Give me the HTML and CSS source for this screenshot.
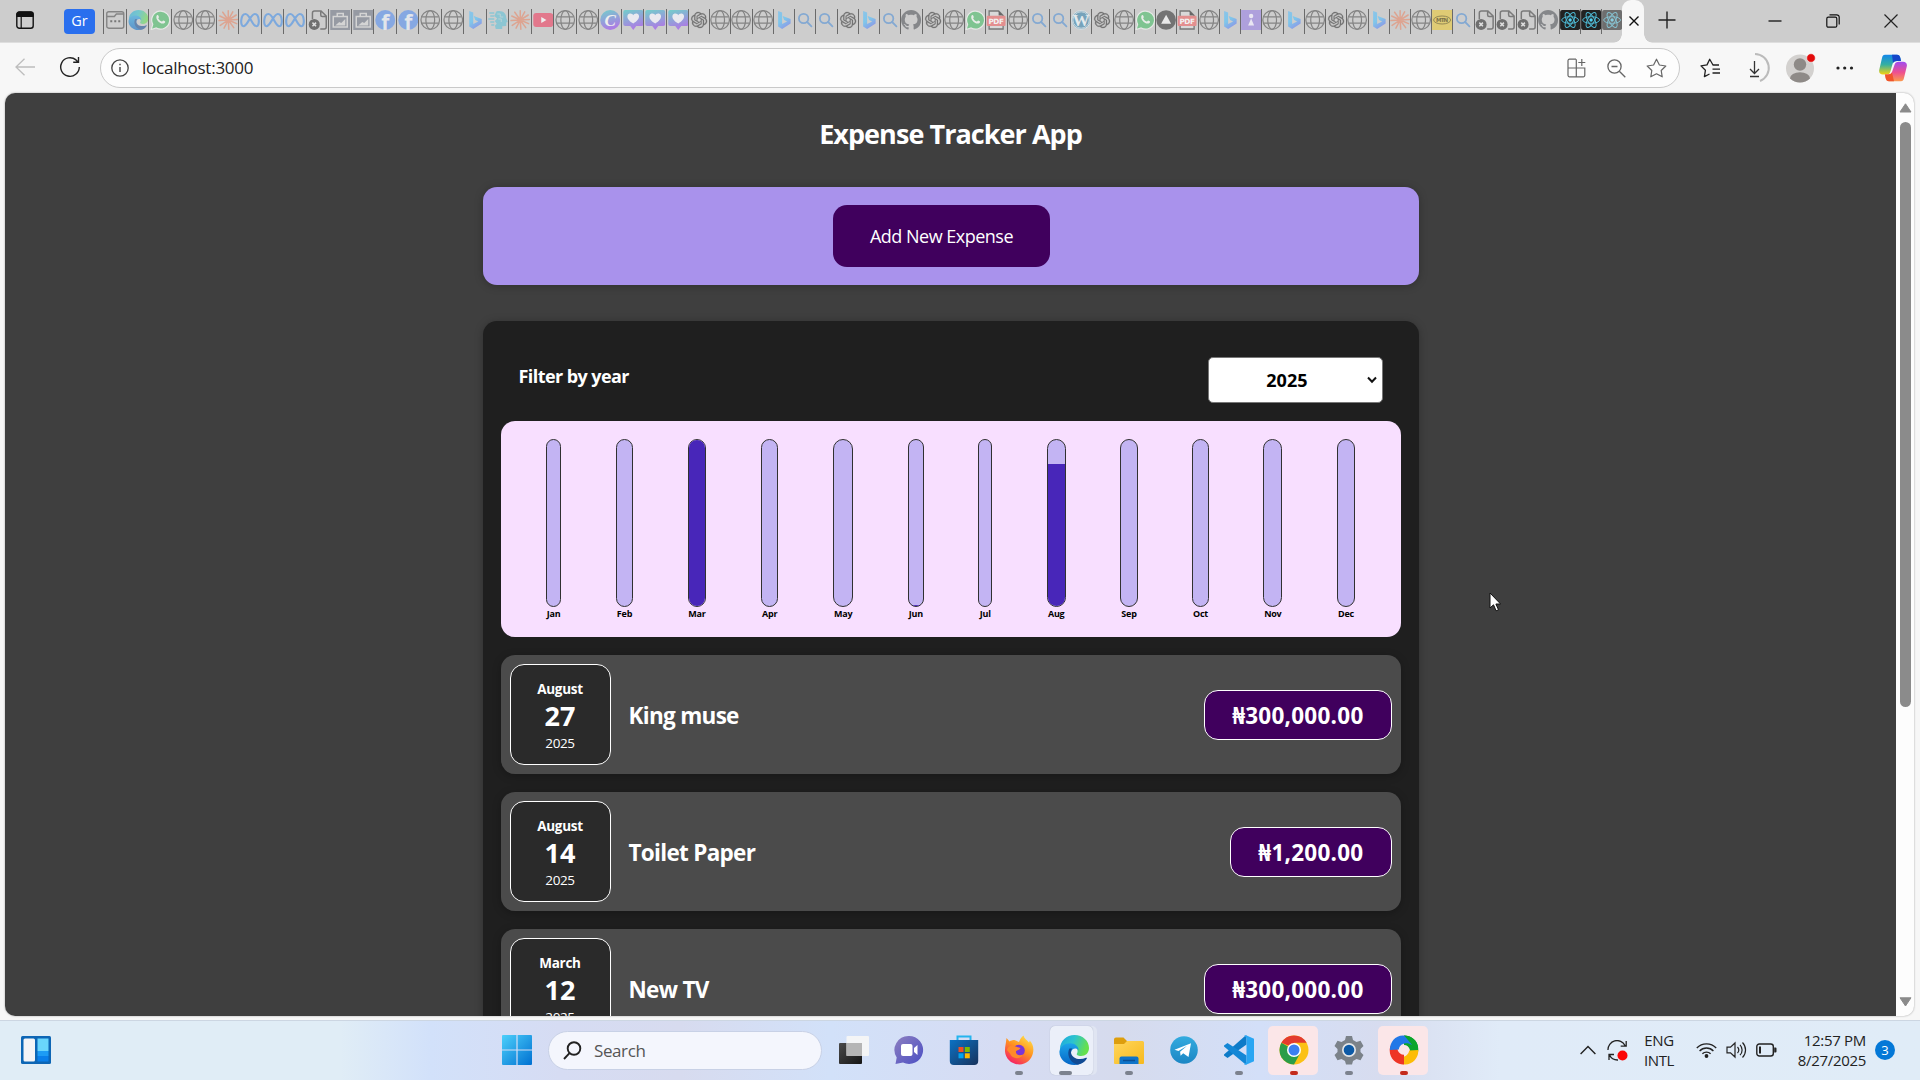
FILE: index.html
```html
<!DOCTYPE html>
<html lang="en">
<head>
<meta charset="utf-8">
<title>Expense Tracker App</title>
<link rel="stylesheet" href="styles.css">
</head>
<body>
<svg class="gradients" aria-hidden="true">
  <defs>
    <linearGradient id="g-edgetop" x1="0" y1="0" x2="1" y2=".3"><stop offset="0" stop-color="#1ba7e0"/><stop offset=".5" stop-color="#2cc3cf"/><stop offset="1" stop-color="#66e04c"/></linearGradient>
    <linearGradient id="g-edgeleft" x1="0" y1="0" x2="0" y2="1"><stop offset="0" stop-color="#1ca5ea"/><stop offset="1" stop-color="#0666c6"/></linearGradient>
    <linearGradient id="g-bing" x1="0" y1="0" x2=".5" y2="1"><stop offset="0" stop-color="#8cc4e8"/><stop offset=".55" stop-color="#7fc6ea"/><stop offset="1" stop-color="#8b9be6"/></linearGradient>
    <linearGradient id="g-heart" x1="0" y1="0" x2=".3" y2="1"><stop offset="0" stop-color="#72cfcb"/><stop offset="1" stop-color="#ac7ce4"/></linearGradient>
    <linearGradient id="g-start" x1="0" y1="0" x2="1" y2="1"><stop offset="0" stop-color="#4cd0fb"/><stop offset="1" stop-color="#0070d1"/></linearGradient>
    <linearGradient id="g-dark" x1="0" y1="0" x2="1" y2="1"><stop offset="0" stop-color="#4a4a4a"/><stop offset="1" stop-color="#151515"/></linearGradient>
    <linearGradient id="g-chat" x1="0" y1="0" x2="1" y2="1"><stop offset="0" stop-color="#8d7fc0"/><stop offset="1" stop-color="#4b4fc4"/></linearGradient>
    <linearGradient id="g-store" x1="0" y1="0" x2="1" y2="1"><stop offset="0" stop-color="#0c72c4"/><stop offset="1" stop-color="#17325c"/></linearGradient>
    <linearGradient id="g-fox" x1=".8" y1="0" x2=".2" y2="1"><stop offset="0" stop-color="#ffe04a"/><stop offset=".45" stop-color="#ff9320"/><stop offset="1" stop-color="#f5156c"/></linearGradient>
    <linearGradient id="g-folder" x1="0" y1="0" x2="1" y2="1"><stop offset="0" stop-color="#ffd65c"/><stop offset="1" stop-color="#f7b91d"/></linearGradient>
    <linearGradient id="g-tg" x1="0" y1="0" x2="0" y2="1"><stop offset="0" stop-color="#33abdf"/><stop offset="1" stop-color="#1b86c4"/></linearGradient>
    <linearGradient id="g-cop1" x1="0" y1="0" x2="0" y2="1"><stop offset="0" stop-color="#1287ea"/><stop offset=".5" stop-color="#35b0a0"/><stop offset="1" stop-color="#f6d20f"/></linearGradient>
    <linearGradient id="g-cop2" x1="0" y1="0" x2="0" y2="1"><stop offset="0" stop-color="#a04bf0"/><stop offset=".55" stop-color="#ee5090"/><stop offset="1" stop-color="#fb9a4e"/></linearGradient>
  </defs>
</svg>
<svg class="sprite" aria-hidden="true">
  <symbol id="globe" viewBox="0 0 20 20"><g fill="none" stroke="#848484" stroke-width="1.2"><circle cx="10" cy="10" r="9.3"/><ellipse cx="10" cy="10" rx="4.4" ry="9.3"/><path d="M1.4 6.8h17.2M1.4 13.2h17.2"/></g></symbol>
  <symbol id="panel" viewBox="0 0 20 20"><g fill="none" stroke="#858585" stroke-width="1.4"><path d="M3.500 1.700h13a2 2 0 0 1 2 2v12.500a2 2 0 0 1-2 2h-13a2 2 0 0 1-2-2V3.700a2 2 0 0 1 2-2zM1.500 6.500h7.600l2-2.500h7.400"/></g><path d="M5 10.200h2v2H5zM9 10.200h2v2H9zM13 10.200h2v2h-2z" fill="#777"/></symbol>
  <symbol id="edge" viewBox="0 0 30 30"><path d="M1 14C1 6 7.500 0 15.500 0 24 0 30 6 30 13c0 5-3.500 8-8 8-3 0-5-1.200-4-2.500C20 15 17 10.500 12 10.500 6 10.500 1.500 13.500 1 18z" fill="url(#g-edgetop)"/><path d="M.5 16C1.500 11 6 8.200 11 8.200c5 0 9 3.300 8.500 7.300-1.500-3-7-2.500-7.500 2-.5 5 5 11 14 7.500-2.500 3.200-6.500 5-10.700 5C6.500 30-.3 23 .5 16z" fill="url(#g-edgeleft)"/><path d="M10.500 13.500c-3 5-.5 13.500 7.500 16 4 0 8-2.500 9.800-6 .3-.6-.2-1-.8-.7-7 3.200-14.500.2-15-5.300 0-1.600.4-3 1.400-4z" fill="#114a93"/></symbol>
  <symbol id="wa" viewBox="0 0 20 20"><path d="M1 19.500l1.500-5.200a9 9 0 1 1 3.500 3.600z" fill="#7fc491" stroke="#e6e9e6" stroke-width="1.200"/><path d="M6.500 5.500c1.200-1 1.600-.2 2.200 1.500.1.600-.9 1-.6 1.500.8 1.500 2 2.500 3.400 3 .6.200 1-1.200 1.600-1 2 .7 2.300 1 1.500 2.200C11.500 16 4.200 9.500 6.500 5.500z" fill="#e8ece8"/></symbol>
  <symbol id="claude" viewBox="0 0 20 20"><path d="M10 10L10 .8M10 10L14.500 1.800M10 10L18 5M10 10L19.300 9.400M10 10L18.400 13.600M10 10L15.500 17.600M10 10L10.600 19.200M10 10L5.800 18.200M10 10L2 15.400M10 10L.8 10.600M10 10L1.500 6M10 10L4.500 2.200" stroke="#dda491" stroke-width="1.500" stroke-linecap="round"/></symbol>
  <symbol id="meta" viewBox="0 0 20 20"><path d="M3 16.200C-.2 16.200.2 4 5.200 4c4.600 0 6.600 12.200 11 12.200C19.800 16.200 19.300 4 14.600 4 10 4 7.500 16.200 3 16.200z" fill="none" stroke="#7da9dd" stroke-width="2.100"/></symbol>
  <symbol id="filex" viewBox="0 0 20 20"><path d="M4.200 9V3a2 2 0 0 1 2-2h6.600l5.200 5v11a2 2 0 0 1-2 2h-4M12.500 1v4a1.500 1.500 0 0 0 1.500 1.500h4" fill="none" stroke="#7a7a7a" stroke-width="1.500"/><circle cx="6" cy="14.400" r="5.500" fill="#6f6f6f"/><path d="M4.200 12.600l3.600 3.600M7.800 12.600l-3.600 3.600" stroke="#ddd" stroke-width="1.500"/></symbol>
  <symbol id="bag" viewBox="0 0 20 20"><path d="M0 0h20v20H0z" fill="#969aa3"/><path d="M3 6.500h14v10.500H3zM7 6.500V3.500h6v3" fill="none" stroke="#d4d4d4" stroke-width="1.500"/><path d="M5 15.500l4-3.500 2 1 4-4v6.500z" fill="#d4d4d4"/></symbol>
  <symbol id="fb" viewBox="0 0 20 20"><circle cx="10" cy="10" r="10" fill="#86a8e2"/><text x="6" y="19.500" font-family="Open Sans, sans-serif" font-weight="700" font-size="21" fill="#e2e5ea">f</text></symbol>
  <symbol id="bing" viewBox="0 0 20 20"><path d="M4 1l4 1.500v11.500l5-2.500-3-1.500-1.500-4 8 3v4.500L8 19l-4-2.500z" fill="url(#g-bing)"/></symbol>
  <symbol id="ai" viewBox="0 0 20 20"><path d="M8 1.500c6-1.500 10 1.500 10 6.500l1.500 4-1.500.6V16l-4 .3V19H7.500l-.8-3.200 1.800-2L6.500 11 9 8.500 6 6z" fill="#8cc6d3"/><path d="M1 3h5M2 6h4M0 9h6M2 12h4M3 15h3" stroke="#8cc6d3" stroke-width="1.300"/><path d="M9 4h3v3h3M10 9h3v3" stroke="#b9d2d7" fill="none"/></symbol>
  <symbol id="yt" viewBox="0 0 20 20"><rect y="3" width="20" height="14" rx="3" fill="#e2788c"/><path d="M8 7l5.200 3L8 13z" fill="#eee"/></symbol>
  <symbol id="canva" viewBox="0 0 20 20"><circle cx="10" cy="10" r="10" fill="url(#g-heart)"/><text x="4.300" y="15.500" font-family="Liberation Serif, serif" font-style="italic" font-weight="700" font-size="17" fill="#eee">C</text></symbol>
  <symbol id="heart" viewBox="0 0 20 20"><path d="M2 0h16a2 2 0 0 1 2 2v12a2 2 0 0 1-2 2h-5l-3 4-3-4H2a2 2 0 0 1-2-2V2a2 2 0 0 1 2-2z" fill="url(#g-heart)"/><path d="M10 13.500C1.500 8.500 4 3.500 7 3.500c1.500 0 2.500.8 3 1.800.5-1 1.500-1.800 3-1.800 3 0 5.500 5-3 10z" fill="#e9e9ef"/></symbol>
  <symbol id="gpt" viewBox="-3 -3 30 30"><path fill="#747474" stroke="#747474" stroke-width=".4" d="M22.2819 9.8211a5.9847 5.9847 0 0 0-.5157-4.9108 6.0462 6.0462 0 0 0-6.5098-2.9A6.0651 6.0651 0 0 0 4.9807 4.1818a5.9847 5.9847 0 0 0-3.9977 2.9 6.0462 6.0462 0 0 0 .7427 7.0966 5.98 5.98 0 0 0 .511 4.9107 6.051 6.051 0 0 0 6.5146 2.9001A5.9847 5.9847 0 0 0 13.2599 24a6.0557 6.0557 0 0 0 5.7718-4.2058 5.9894 5.9894 0 0 0 3.9977-2.9001 6.0557 6.0557 0 0 0-.7475-7.0729zm-9.022 12.6081a4.4755 4.4755 0 0 1-2.8764-1.0408l.1419-.0804 4.7783-2.7582a.7948.7948 0 0 0 .3927-.6813v-6.7369l2.02 1.1686a.071.071 0 0 1 .038.052v5.5826a4.504 4.504 0 0 1-4.4945 4.4944zm-9.6607-4.1254a4.4708 4.4708 0 0 1-.5346-3.0137l.142.0852 4.783 2.7582a.7712.7712 0 0 0 .7806 0l5.8428-3.3685v2.3324a.0804.0804 0 0 1-.0332.0615L9.74 19.9502a4.4992 4.4992 0 0 1-6.1408-1.6464zM2.3408 7.8956a4.485 4.485 0 0 1 2.3655-1.9728V11.6a.7664.7664 0 0 0 .3879.6765l5.8144 3.3543-2.0201 1.1685a.0757.0757 0 0 1-.071 0l-4.8303-2.7865A4.504 4.504 0 0 1 2.3408 7.872zm16.5963 3.8558L13.1038 8.364 15.1192 7.2a.0757.0757 0 0 1 .071 0l4.8303 2.7913a4.4944 4.4944 0 0 1-.6765 8.1042v-5.6772a.79.79 0 0 0-.407-.667zm2.0107-3.0231l-.142-.0852-4.7735-2.7818a.7759.7759 0 0 0-.7854 0L9.409 9.2297V6.8974a.0662.0662 0 0 1 .0284-.0615l4.8303-2.7866a4.4992 4.4992 0 0 1 6.6802 4.66zM8.3065 12.863l-2.02-1.1638a.0804.0804 0 0 1-.038-.0567V6.0742a4.4992 4.4992 0 0 1 7.3757-3.4537l-.142.0805L8.704 5.459a.7948.7948 0 0 0-.3927.6813zm1.0976-2.3654l2.602-1.4998 2.6069 1.4998v2.9994l-2.5974 1.4997-2.6067-1.4997Z"/></symbol>
  <symbol id="search" viewBox="0 0 20 20"><g fill="none" stroke="#84a9d2" stroke-width="1.800"><circle cx="8.500" cy="8.500" r="4.700"/><path d="M12 12l4.300 4.300" stroke-linecap="round"/></g></symbol>
  <symbol id="github" viewBox="0 0 16 16"><path fill="#85878a" d="M8 0C3.580 0 0 3.580 0 8c0 3.540 2.290 6.530 5.470 7.590.4.070.55-.17.55-.38 0-.19-.01-.82-.01-1.490-2.010.37-2.530-.49-2.690-.94-.09-.23-.48-.94-.82-1.130-.28-.15-.68-.52-.01-.53.63-.01 1.080.58 1.230.82.72 1.210 1.870.87 2.330.66.07-.52.28-.87.51-1.070-1.780-.2-3.640-.89-3.640-3.950 0-.87.31-1.590.82-2.150-.08-.2-.36-1.020.08-2.120 0 0 .67-.21 2.200.82.64-.18 1.320-.27 2-.27s1.360.09 2 .27c1.530-1.040 2.200-.82 2.200-.82.44 1.100.16 1.920.08 2.120.51.56.82 1.270.82 2.150 0 3.070-1.870 3.750-3.650 3.950.29.25.54.73.54 1.480 0 1.070-.01 1.930-.01 2.200 0 .21.15.46.55.38A8.010 8.010 0 0 0 16 8c0-4.420-3.580-8-8-8z"/></symbol>
  <symbol id="pdf" viewBox="0 0 20 20"><path d="M3 19V1h9.500L17 5.500V19z" fill="#d9d9d9" stroke="#777" stroke-width="1.300"/><path d="M12.500 1v4.500H17z" fill="#666"/><rect x=".6" y="5.800" width="18.800" height="10.200" rx="1" fill="#e38f8f"/><text x="2.300" y="13.800" font-family="DejaVu Sans, sans-serif" font-weight="700" font-size="7.300" textLength="15.500" fill="#f2f2f2">PDF</text></symbol>
  <symbol id="wp" viewBox="0 0 20 20"><circle cx="10" cy="10" r="9.400" fill="#76a3bb" stroke="#dce3e6" stroke-width="1"/><circle cx="10" cy="10" r="8.200" fill="none" stroke="#dce3e6" stroke-width=".8"/><text x="1.400" y="16" font-family="Liberation Serif, serif" font-weight="700" font-size="17" fill="#e4e9eb">W</text></symbol>
  <symbol id="tri" viewBox="0 0 20 20"><circle cx="10" cy="10" r="9.800" fill="#737373"/><path d="M10 4.800l5 9H5z" fill="#e8e8e8"/></symbol>
  <symbol id="purp" viewBox="0 0 20 20"><path d="M0 0h20v20H0z" fill="#aea0dc"/><circle cx="10" cy="6" r="2.200" fill="#e9e6f2"/><path d="M10 8.500l3 7H7z" fill="#e9e6f2"/></symbol>
  <symbol id="mtn" viewBox="0 0 20 20"><path d="M0 0h20v20H0z" fill="#dfcb74"/><ellipse cx="10" cy="10" rx="8.500" ry="4" fill="none" stroke="#8a8050" stroke-width=".9"/><text x="4" y="12.200" font-family="DejaVu Sans, sans-serif" font-weight="700" font-size="5.500" textLength="12" fill="#7d744b">MTN</text></symbol>
  <symbol id="react" viewBox="0 0 20 20"><rect width="20" height="20" rx="2" fill="#222"/><g fill="none" stroke="#4db8d3" stroke-width="1"><ellipse cx="10" cy="10" rx="8.400" ry="3.300"/><ellipse cx="10" cy="10" rx="8.400" ry="3.300" transform="rotate(60 10 10)"/><ellipse cx="10" cy="10" rx="8.400" ry="3.300" transform="rotate(120 10 10)"/></g><circle cx="10" cy="10" r="1.700" fill="#53d0f0"/></symbol>
</svg>

<header class="tabstrip">
  <svg class="workspaces" viewBox="0 0 18 18"><rect x=".8" y="1" width="16.400" height="16.200" rx="2.500" fill="none" stroke="#111" stroke-width="1.400"/><path d="M1 3.200A2.200 2.200 0 0 1 3.200 1h11.600A2.200 2.200 0 0 1 17 3.200V5.500H1zM5.200 5v12" fill="#111" stroke="#111" stroke-width="1.200"/></svg>
  <span class="tab-group">Gr</span>
  <nav class="tabs tabs-wide">
    <svg class="tab"><use href="#panel"/></svg><svg class="tab faded"><use href="#edge"/></svg><svg class="tab"><use href="#wa"/></svg><svg class="tab"><use href="#globe"/></svg><svg class="tab"><use href="#globe"/></svg><svg class="tab"><use href="#claude"/></svg><svg class="tab"><use href="#meta"/></svg><svg class="tab"><use href="#meta"/></svg><svg class="tab"><use href="#meta"/></svg><svg class="tab"><use href="#filex"/></svg><svg class="tab"><use href="#bag"/></svg><svg class="tab"><use href="#bag"/></svg><svg class="tab"><use href="#fb"/></svg><svg class="tab"><use href="#fb"/></svg><svg class="tab"><use href="#globe"/></svg><svg class="tab"><use href="#globe"/></svg><svg class="tab"><use href="#bing"/></svg><svg class="tab"><use href="#ai"/></svg><svg class="tab"><use href="#claude"/></svg><svg class="tab"><use href="#yt"/></svg><svg class="tab"><use href="#globe"/></svg><svg class="tab"><use href="#globe"/></svg><svg class="tab"><use href="#canva"/></svg><svg class="tab"><use href="#heart"/></svg><svg class="tab"><use href="#heart"/></svg><svg class="tab"><use href="#heart"/></svg>
  </nav>
  <nav class="tabs tabs-narrow">
    <svg class="tab"><use href="#gpt"/></svg><svg class="tab"><use href="#globe"/></svg><svg class="tab"><use href="#globe"/></svg><svg class="tab"><use href="#globe"/></svg><svg class="tab"><use href="#bing"/></svg><svg class="tab"><use href="#search"/></svg><svg class="tab"><use href="#search"/></svg><svg class="tab"><use href="#gpt"/></svg><svg class="tab"><use href="#bing"/></svg><svg class="tab"><use href="#search"/></svg><svg class="tab"><use href="#github"/></svg><svg class="tab"><use href="#gpt"/></svg><svg class="tab"><use href="#globe"/></svg><svg class="tab"><use href="#wa"/></svg><svg class="tab"><use href="#pdf"/></svg><svg class="tab"><use href="#globe"/></svg><svg class="tab"><use href="#search"/></svg><svg class="tab"><use href="#search"/></svg><svg class="tab"><use href="#wp"/></svg><svg class="tab"><use href="#gpt"/></svg><svg class="tab"><use href="#globe"/></svg><svg class="tab"><use href="#wa"/></svg><svg class="tab"><use href="#tri"/></svg><svg class="tab"><use href="#pdf"/></svg><svg class="tab"><use href="#globe"/></svg><svg class="tab"><use href="#bing"/></svg><svg class="tab"><use href="#purp"/></svg><svg class="tab"><use href="#globe"/></svg><svg class="tab"><use href="#bing"/></svg><svg class="tab"><use href="#globe"/></svg><svg class="tab"><use href="#gpt"/></svg><svg class="tab"><use href="#globe"/></svg><svg class="tab"><use href="#bing"/></svg><svg class="tab"><use href="#claude"/></svg><svg class="tab"><use href="#globe"/></svg><svg class="tab"><use href="#mtn"/></svg><svg class="tab"><use href="#search"/></svg><svg class="tab"><use href="#filex"/></svg><svg class="tab"><use href="#filex"/></svg><svg class="tab"><use href="#filex"/></svg><svg class="tab"><use href="#github"/></svg><svg class="tab"><use href="#react"/></svg><svg class="tab"><use href="#react"/></svg><svg class="tab faded"><use href="#react"/></svg>
  </nav>
  <div class="tab-active"><svg width="10" height="10" viewBox="0 0 10 10"><path d="M.5.5l9 9M9.500.5l-9 9" stroke="#111" stroke-width="1.400"/></svg></div>
  <svg class="new-tab" width="18" height="18" viewBox="0 0 18 18"><path d="M9 .5v17M.5 9h17" stroke="#222" stroke-width="1.400"/></svg>
  <div class="window-controls">
    <svg width="14" height="14" viewBox="0 0 14 14"><path d="M.5 7h13" stroke="#111" stroke-width="1.300"/></svg>
    <svg width="14" height="14" viewBox="0 0 14 14"><g fill="none" stroke="#111" stroke-width="1.200"><rect x=".8" y="3.200" width="10" height="10" rx="1.500"/><path d="M3.500.8h7.200a2.500 2.500 0 0 1 2.500 2.500v7.200"/></g></svg>
    <svg width="14" height="14" viewBox="0 0 14 14"><path d="M.5.5l13 13M13.500.5l-13 13" stroke="#222" stroke-width="1.200"/></svg>
  </div>
</header>

<div class="toolbar">
  <svg class="back" width="20" height="18" viewBox="0 0 20 18"><path d="M9.500.7L1 9l8.500 8.300M1 9h19" fill="none" stroke="#bdbdbd" stroke-width="1.300"/></svg>
  <svg class="reload" width="22" height="22" viewBox="0 0 22 22"><path d="M20.300 11A9.300 9.300 0 1 1 17 3.900L19 6M19.500 1v5.300h-5.300" fill="none" stroke="#222" stroke-width="1.400"/></svg>
  <div class="address">
    <svg width="18" height="18" viewBox="0 0 18 18"><circle cx="9" cy="9" r="8.200" fill="none" stroke="#444" stroke-width="1.300"/><path d="M9 8v5M9 4.800v1.500" stroke="#444" stroke-width="1.400"/></svg>
    <span class="url">localhost:3000</span>
    <svg class="split" width="19" height="20" viewBox="0 0 19 20"><path d="M9 1.200H2.500A1.500 1.500 0 0 0 1 2.700v14.600a1.500 1.500 0 0 0 1.500 1.500h13.800a1.500 1.500 0 0 0 1.500-1.500V10H1M9.300 1.200v17.600M14.800 1v7M11.300 4.500h7" fill="none" stroke="#666" stroke-width="1.200"/></svg>
    <svg class="zoomout" width="19" height="19" viewBox="0 0 19 19"><g fill="none" stroke="#666" stroke-width="1.300"><circle cx="7.500" cy="7.500" r="6.600"/><path d="M12.300 12.300l6 6M4.500 7.500h6"/></g></svg>
    <svg class="star" width="21" height="20" viewBox="0 0 21 20"><path d="M10.500 1.200l2.900 5.800 6.400 1-4.600 4.500 1 6.300-5.700-3-5.700 3 1-6.300L1.200 8l6.400-1z" fill="none" stroke="#666" stroke-width="1.200" stroke-linejoin="round"/></svg>
  </div>
  <svg class="favs" width="21" height="20" viewBox="0 0 21 20"><path d="M13 7L9.700 1.200 7 6.900l-6 1 4.400 4.400-1 6.300L9.500 16" fill="none" stroke="#222" stroke-width="1.300" stroke-linejoin="round"/><path d="M12.600 7H19M12.500 11.200H20M12.500 15H20" fill="none" stroke="#222" stroke-width="1.300"/></svg>
  <svg class="download" width="22" height="30" viewBox="0 0 22 30"><path d="M6 1a14 14 0 0 1 5 27" fill="none" stroke="#bbb" stroke-width="2"/><path d="M5.500 8v12.500M1 16l4.500 4.500L10 16M1 23.500h9" fill="none" stroke="#333" stroke-width="1.300"/></svg>
  <svg class="avatar" width="30" height="30" viewBox="0 0 30 30"><clipPath id="c-av"><circle cx="14" cy="15.500" r="14"/></clipPath><circle cx="14" cy="15.500" r="14" fill="#d3d1cf"/><g clip-path="url(#c-av)" fill="#8e8a87"><circle cx="14" cy="11.500" r="6.200"/><ellipse cx="14" cy="25.500" rx="10" ry="6.200"/></g><circle cx="25" cy="5" r="4.300" fill="#e30b0b" stroke="#f7f7f7" stroke-width=".6"/></svg>
  <svg class="more" width="18" height="4" viewBox="0 0 18 4"><g fill="#222"><circle cx="2" cy="2" r="1.600"/><circle cx="8.700" cy="2" r="1.600"/><circle cx="15.500" cy="2" r="1.600"/></g></svg>
  <svg class="copilot" width="28" height="28" viewBox="0 0 28 28"><path d="M6 .8h12c2 0 2.700 1 3.300 3L22 7h-4c-3 0-4 1.500-4.600 3.500l-2 7C10.800 19.500 10 20.500 8 20.500H4c-3 0-4.500-2-3.700-5L3 4C3.500 1.800 4.300.8 6 .8z" fill="url(#g-cop1)"/><path d="M13 .8h5c2 0 2.700 1 3.300 3L22 7h-4c-2 0-3.300.8-4 2z" fill="#1546c9"/><path d="M22 27.200H10c-2 0-2.700-1-3.300-3L6 20.500h3c2.500 0 3.500-1 4.200-3l2.400-7C16.300 8.500 17.500 7.700 19.500 7.700H24c3 0 4.500 2 3.700 5L25 24c-.5 2.200-1.300 3.200-3 3.200z" fill="url(#g-cop2)"/><path d="M15 27.200h-5c-2 0-2.700-1-3.300-3L6 20.500h3c2 0 3-.8 4-2z" fill="#f0542c"/></svg>
</div>

<div class="frame">
  <div class="viewport">
    <main class="page">
      <h1 class="title">Expense Tracker App</h1>
      <section class="new-expense"><button class="add-btn">Add New Expense</button></section>
      <section class="expenses">
        <div class="filter">
          <label class="filter-label">Filter by year</label>
          <div class="year"><span>2025</span><svg width="10" height="8" viewBox="0 0 10 8"><path d="M1 1.500l4 4.200 4-4.200" fill="none" stroke="#111" stroke-width="2"/></svg></div>
        </div>
        <div class="chart">
          <div class="month"><div class="bar"></div><span>Jan</span></div>
          <div class="month"><div class="bar"></div><span>Feb</span></div>
          <div class="month"><div class="bar"><i style="height:100%"></i></div><span>Mar</span></div>
          <div class="month"><div class="bar"></div><span>Apr</span></div>
          <div class="month"><div class="bar"></div><span>May</span></div>
          <div class="month"><div class="bar"><i style="height:0.6%"></i></div><span>Jun</span></div>
          <div class="month"><div class="bar"></div><span>Jul</span></div>
          <div class="month"><div class="bar"><i style="height:85.500%"></i></div><span>Aug</span></div>
          <div class="month"><div class="bar"></div><span>Sep</span></div>
          <div class="month"><div class="bar"></div><span>Oct</span></div>
          <div class="month"><div class="bar"></div><span>Nov</span></div>
          <div class="month"><div class="bar"></div><span>Dec</span></div>
        </div>
        <article class="item"><div class="date"><b class="m">August</b><b class="d">27</b><span class="y">2025</span></div><h2>King muse</h2><div class="amount">₦300,000.00</div></article>
        <article class="item"><div class="date"><b class="m">August</b><b class="d">14</b><span class="y">2025</span></div><h2>Toilet Paper</h2><div class="amount">₦1,200.00</div></article>
        <article class="item"><div class="date"><b class="m">March</b><b class="d">12</b><span class="y">2025</span></div><h2>New TV</h2><div class="amount">₦300,000.00</div></article>
      </section>
    </main>
    <div class="scrollbar">
      <svg width="13" height="10" viewBox="0 0 13 10"><path d="M6.500.8L12 9H1z" fill="#8b8b8b" stroke="#8b8b8b" stroke-linejoin="round"/></svg>
      <div class="thumb"></div>
      <svg class="down" width="13" height="10" viewBox="0 0 13 10"><path d="M6.500 9L12 .8H1z" fill="#8b8b8b" stroke="#8b8b8b" stroke-linejoin="round"/></svg>
    </div>
  </div>
</div>

<footer class="taskbar">
  <svg class="widgets" width="30" height="28" viewBox="0 0 30 28"><rect width="30" height="28" rx="1.500" fill="#0d66b5"/><rect x="2.500" y="2.500" width="11.500" height="23" rx="1.500" fill="#f4f4f6"/><path d="M16.500 2.500h11v12.500h-11z" fill="#69d5fc"/><path d="M16.500 15h11v5h-11z" fill="#1d9cf5"/><path d="M16.500 20h11v5.500h-11z" fill="#0a7fea"/></svg>
  <svg class="start" width="30" height="30" viewBox="0 0 30 30"><path d="M0 1a1 1 0 0 1 1-1h13.400v14.400H0zM15.600 0H29a1 1 0 0 1 1 1v13.400H15.600zM0 15.600h14.400V30H1a1 1 0 0 1-1-1zM15.600 15.600H30V29a1 1 0 0 1-1 1H15.600z" fill="url(#g-start)"/></svg>
  <div class="searchbox"><svg width="19" height="19" viewBox="0 0 19 19"><g fill="none" stroke="#222" stroke-width="1.900"><circle cx="11" cy="7.500" r="6.300"/><path d="M6.500 12.200L1 18"/></g></svg><span>Search</span></div>
  <div class="apps">
    <div class="app"><svg viewBox="0 0 30 30"><rect y="8" width="23" height="21" rx="1" fill="url(#g-dark)"/><rect x="7.500" y="1" width="22.500" height="20" rx="1" fill="#f5f5f5" fill-opacity=".95"/><path d="M7.500 8H23v13H7.500z" fill="#b5b5b5"/></svg></div>
    <div class="app"><svg viewBox="0 0 30 30"><path d="M15 1a14 14 0 1 1-6 26.600L1.500 29l1.200-6.500A14 14 0 0 1 15 1z" fill="url(#g-chat)"/><rect x="7" y="9" width="11.500" height="12" rx="2" fill="#fff"/><path d="M20 13l3.500-3v10L20 17z" fill="#fff"/></svg></div>
    <div class="app"><svg viewBox="0 0 30 30"><path d="M8.500 6V1.500h13V6" fill="none" stroke="#25b4ee" stroke-width="2"/><path d="M.8 5h28.400v21a4 4 0 0 1-4 4H4.800a4 4 0 0 1-4-4z" fill="url(#g-store)"/><path d="M9.500 12h5v5h-5z" fill="#f25022"/><path d="M15.800 12h5v5h-5z" fill="#7fba00"/><path d="M9.500 18.300h5v5h-5z" fill="#00a4ef"/><path d="M15.800 18.300h5v5h-5z" fill="#ffb900"/></svg></div>
    <div class="app running"><svg viewBox="0 0 30 30"><path d="M2.500 3l3 3.500C7 5.500 8.500 5 10.500 5l4.500 2c1-3 2.500-5 4.500-6.500.5 3 3.500 4.500 5.500 7 .5-.8.7-1.300.7-2C29 9 30 13 29 18c-1.300 6.500-7 11.500-13.500 11.500C8 29.500 1.500 24 1 16.500.8 12 2 8.500 2.500 3z" fill="url(#g-fox)"/><circle cx="15" cy="15.500" r="5.800" fill="#7a35d8"/><path d="M3 15c1-4 5-5.500 8.500-3.500l5 1.500c-1 2-3.500 2.500-4.500 3-.5 4 3.500 5 7 3.500-3 5.500-11 4.500-13-1z" fill="#ff8a2a"/></svg></div>
    <div class="app running current"><svg viewBox="0 0 30 30"><use href="#edge"/></svg></div>
    <div class="app running"><svg viewBox="0 0 30 30"><path d="M0 4.500A2 2 0 0 1 2 2.500h7.500L13 6v6H0z" fill="#dd9e0d"/><path d="M0 9h10l3-3h15.500A1.500 1.500 0 0 1 30 7.500V28a1 1 0 0 1-1 1H1a1 1 0 0 1-1-1z" fill="url(#g-folder)"/><path d="M5.500 29v-5.500a2 2 0 0 1 2-2h15a2 2 0 0 1 2 2V29z" fill="#0f74c9"/><path d="M9 25.500h12" stroke="#0a4e94" stroke-width="1.500"/></svg></div>
    <div class="app"><svg viewBox="0 0 30 30"><circle cx="15" cy="15" r="13.800" fill="url(#g-tg)"/><path d="M5.500 14.700L22 8.300 19.500 22l-5.300-3.800-2.600 2.600-.5-4 7-6L9.500 16z" fill="#fff"/></svg></div>
    <div class="app running"><svg viewBox="0 0 30 30"><path d="M22.500.5v9L3.500 23 0 20.500v-1L21 1z" fill="#0d7bc8"/><path d="M22.500 29.500v-9L3.500 8 0 10.500v1L21 29z" fill="#1387d6"/><path d="M22 .3l8 3.500v22.400l-8 3.500c-1 .3-1.800-.2-1.800-.2L22.500 27V3L20.200.5S21 0 22 .3z" fill="#29a6f3"/></svg></div>
    <div class="app running alert"><svg viewBox="0 0 30 30"><circle cx="15" cy="15" r="14.500" fill="#fbc116"/><path d="M2.400 7.800A14.500 14.500 0 0 0 15 29.500l6-11z" fill="#2a9d48"/><path d="M2.400 7.800A14.500 14.500 0 0 1 27.600 7.800H15v5z" fill="#e33b2e"/><circle cx="15" cy="15" r="7" fill="#fff"/><circle cx="15" cy="15" r="5.500" fill="#3b7ff0"/></svg></div>
    <div class="app running"><svg viewBox="0 0 30 30"><path d="M12 1h6l1 4 3.500 2 4-1.200 3 5.200-3 3v3l3 3-3 5.200-4-1.200-3.500 2-1 3.500h-6l-1-3.500-3.500-2-4 1.200L.5 20l3-3v-3l-3-3 3-5.200 4 1.200L11 5z" fill="#7b8289"/><circle cx="15" cy="15" r="7" fill="#e3e6e9"/><circle cx="15" cy="15" r="5.300" fill="#0d5aa6"/></svg></div>
    <div class="app running alert"><svg viewBox="0 0 30 30"><path d="M15 .5C22 .5 29 5 29.300 14c.2 5-2.500 9-6.300 9-2 0-3.500-1-3.500-1C23 18 21 10 15 10z" fill="#0ba52b"/><path d="M29.300 15C29.500 23 24 29.500 16 29.500c-5.500 0-9.500-3-9.500-7 0-1.500.7-2.500.7-2.500 5 3.500 12 2 13-4.500z" fill="#fdbc06"/><path d="M15 29.500C7 29.500.7 23.500.7 15.500c0-5 3-9 6.800-8.500 1.500.2 2.500.8 2.500.8C6.500 13 9 19.800 15 19.800z" fill="#ee3525"/><path d="M.9 15C1 7 6 .5 14 .5c5.500 0 9.500 3 9.500 6.500 0 1.800-.7 3-.7 3C18 6.500 10.500 8.500 9.800 14.500z" fill="#2178e8"/><path d="M15 .5C22 .5 28 5 29 12c-2 2-5 1-6-2C21 7.500 19 5 15 .5z" fill="#0ba52b"/></svg></div>
  </div>
  <div class="tray">
    <svg class="caret" width="16" height="10" viewBox="0 0 16 10"><path d="M.6 9L8 1.500 15.400 9" fill="none" stroke="#222" stroke-width="1.400"/></svg>
    <svg class="sync" width="21" height="21" viewBox="0 0 21 21"><path d="M1 10A9 9 0 0 1 18 5.500M19.200 1v5.200h-5.500M2 20v-5.500h5M2.500 15A9 9 0 0 0 11 20" fill="none" stroke="#222" stroke-width="1.300"/><circle cx="15.500" cy="15.500" r="5" fill="#fb0505"/></svg>
    <div class="lang"><span>ENG</span><span>INTL</span></div>
    <svg class="wifi" width="21" height="16" viewBox="0 0 21 16"><g fill="none" stroke="#222" stroke-width="1.400"><path d="M.8 6a13.500 13.500 0 0 1 19.400 0M3.600 9a9.600 9.600 0 0 1 13.800 0M6.400 11.800a5.800 5.800 0 0 1 8.200 0"/></g><circle cx="10.500" cy="14" r="1.900" fill="#222"/></svg>
    <svg class="vol" width="21" height="18" viewBox="0 0 21 18"><path d="M1 6.200h3.500L9 2v14l-4.500-4.200H1zM11.500 6a4.500 4.500 0 0 1 0 6M14 3.800a7.500 7.500 0 0 1 0 10.400M16.500 1.500a10.800 10.800 0 0 1 0 15" fill="none" stroke="#222" stroke-width="1.200"/></svg>
    <svg class="batt" width="21" height="14" viewBox="0 0 21 14"><rect x=".8" y="1" width="16.500" height="12" rx="2.500" fill="none" stroke="#222" stroke-width="1.400"/><path d="M3 3.500h2v7H3zM18.200 4.500h1.300a1 1 0 0 1 1 1v3a1 1 0 0 1-1 1h-1.300z" fill="#222"/></svg>
    <div class="clock"><span>12:57 PM</span><span>8/27/2025</span></div>
    <span class="badge">3</span>
  </div>
</footer>

<svg class="cursor" width="14" height="20" viewBox="0 0 14 20"><path d="M1 1v15l3.500-3.200 2.600 6 2.400-1-2.600-5.800h4.700z" fill="#fff" stroke="#111" stroke-width="1"/></svg>
</body>
</html>
```

FILE: styles.css
```css
* { box-sizing: border-box; }

body {
  margin: 0;
  width: 1920px;
  height: 1080px;
  overflow: hidden;
  display: flex;
  flex-direction: column;
  background: #f7f7f7;
  color: #222;
  font-family: "Open Sans", "Noto Sans", sans-serif;
}

svg { display: block; flex: none; }
.gradients { position: absolute; width: 0; height: 0; }
.sprite { display: none; }

/* Tab strip */
.tabstrip {
  flex: none;
  height: 43px;
  display: flex;
  align-items: flex-start;
  background: #cdcdcd;
  border-bottom: 1px solid #dedede;
}
.workspaces { width: 18px; height: 18px; margin: 11px 30px 0 16px; }
.tab-group {
  width: 31px;
  height: 25px;
  margin: 9px 8px 0 0;
  border-radius: 4px;
  background: #2a6fee;
  color: #fff;
  font-size: 14.5px;
  line-height: 24px;
  text-align: center;
}
.tabs { display: flex; padding-top: 9px; }
.tab {
  height: 25px;
  padding: 1px 0 4px 1px;
  border-left: 1px solid #6a6a6a;
}
.tabs-wide .tab { width: 22.5px; }
.tabs-narrow .tab { width: 21.24px; padding-left: 0; }
.faded use { opacity: .55; }
.tab-active {
  position: relative;
  width: 22px;
  height: 43px;
  border-radius: 9px 9px 0 0;
  background: #f7f7f7;
  padding: 16px 0 0 7px;
}
.tab-active::before,
.tab-active::after {
  content: "";
  position: absolute;
  bottom: 0;
  width: 9px;
  height: 9px;
}
.tab-active::before { right: 100%; background: radial-gradient(circle at 0 0, transparent 8.5px, #f7f7f7 9px); }
.tab-active::after { left: 100%; background: radial-gradient(circle at 100% 0, transparent 8.5px, #f7f7f7 9px); }
.new-tab { margin: 11px 0 0 14px; }
.window-controls { display: flex; gap: 44px; margin: 14px 22px 0 auto; }

/* Toolbar */
.toolbar {
  flex: none;
  height: 50px;
  display: flex;
  align-items: center;
  padding: 0 13px 0 15px;
}
.back, .reload { margin-bottom: 2px; }
.reload { margin-left: 24px; }
.address {
  width: 1580px;
  height: 40px;
  margin: 0 20px 0 19px;
  display: flex;
  align-items: center;
  border: 1px solid #c9c9c9;
  border-radius: 20px;
  background: #fdfdfd;
  padding: 0 12px 0 10px;
}
.url { margin: 0 auto 1px 13px; font-size: 17px; letter-spacing: -.23px; }
.zoomout { margin-left: 21px; }
.star { margin-left: 20px; }
.download { margin-left: 28px; }
.avatar { margin: 0 0 1px 15px; }
.more { margin-left: 20px; }
.copilot { margin-left: auto; }

/* Browser content area */
.frame { flex: none; height: 927px; padding: 0 6px 4px 5px; }
.viewport {
  height: 923px;
  display: flex;
  overflow: hidden;
  border-radius: 10px;
  background: #fdfdfd;
  box-shadow: 0 0 2px #999;
}
.page {
  width: 1891px;
  background: #3f3f3f;
  color: #fff;
  padding-top: 23px;
  display: flex;
  flex-direction: column;
  align-items: center;
}
.scrollbar { flex: 1; display: flex; flex-direction: column; align-items: center; padding: 10px 0 9px; }
.thumb { width: 11px; height: 585px; margin-top: 9px; border-radius: 6px; background: #8b8b8b; }
.down { margin-top: auto; }

.title { margin: 0 0 35px; font-size: 27px; line-height: 36px; letter-spacing: -.95px; font-weight: 700; }
.new-expense {
  flex: none;
  width: 936px;
  padding: 18px 36px 18px 18px;
  display: flex;
  justify-content: center;
  border-radius: 14px;
  background: #a992ec;
  box-shadow: 0 1px 9px rgba(0, 0, 0, .25);
}
.add-btn {
  width: 217px;
  height: 62px;
  border: 0;
  border-radius: 14px;
  background: #40005d;
  color: #fff;
  font: 400 18px "Open Sans", sans-serif;
  letter-spacing: -.5px;
}
.expenses {
  flex: none;
  width: 936px;
  height: 1100px;
  margin-top: 36px;
  padding: 36px 18px 0;
  border-radius: 14px;
  background: #1f1f1f;
  box-shadow: 0 1px 9px rgba(0, 0, 0, .25);
}
.filter { display: flex; justify-content: space-between; padding: 0 18px; }
.filter-label { font-size: 18px; font-weight: 700; line-height: 38px; letter-spacing: -.57px; }
.year {
  width: 175px;
  height: 46px;
  display: flex;
  align-items: center;
  justify-content: flex-end;
  gap: 59px;
  padding: 0 5px;
  border: 1px solid #777;
  border-radius: 5px;
  background: #fff;
  color: #000;
  font-size: 18px;
  font-weight: 700;
}
.chart {
  height: 216px;
  margin-top: 18px;
  padding: 18px;
  display: flex;
  justify-content: space-around;
  border-radius: 14px;
  background: #f8dfff;
  color: #000;
}
.month { display: flex; flex-direction: column; align-items: center; }
.month:nth-child(1) { width: 15.5px; }
.month:nth-child(2) { width: 17px; }
.month:nth-child(3) { width: 18.5px; }
.month:nth-child(4) { width: 17.5px; }
.month:nth-child(5) { width: 20px; }
.month:nth-child(6) { width: 15.8px; }
.month:nth-child(7) { width: 13.7px; }
.month:nth-child(8) { width: 18.9px; }
.month:nth-child(9) { width: 17.3px; }
.month:nth-child(10) { width: 16.3px; }
.month:nth-child(11) { width: 19px; }
.month:nth-child(12) { width: 18px; }
.month span { font-size: 9px; font-weight: 700; line-height: 14px; letter-spacing: -.2px; }
.bar {
  flex: none;
  width: 100%;
  height: 168px;
  display: flex;
  align-items: flex-end;
  overflow: hidden;
  border: 1px solid #313131;
  border-radius: 11px;
  background: #c3b4f3;
}
.bar i { width: 100%; background: #4826b9; }

.item {
  height: 119px;
  margin-top: 18px;
  padding: 9px;
  display: flex;
  align-items: center;
  border-radius: 14px;
  background: #4b4b4b;
  box-shadow: 0 2px 9px rgba(0, 0, 0, .25);
}
.item h2 { margin: 0 auto 0 18px; padding-top: 2px; font-size: 22.5px; line-height: 30px; letter-spacing: -.7px; }
.date {
  width: 101px;
  height: 101px;
  padding-top: 15px;
  display: flex;
  flex-direction: column;
  align-items: center;
  border: 1px solid #fff;
  border-radius: 14px;
  background: #2a2a2a;
}
.m { font-size: 13.5px; line-height: 18px; letter-spacing: -.3px; }
.d { font-size: 27px; line-height: 36px; }
.y { font-size: 13.5px; line-height: 18px; letter-spacing: -.4px; }
.amount {
  height: 50px;
  padding: 0 27px;
  border: 1px solid #fff;
  border-radius: 14px;
  background: #40005d;
  font-size: 22.5px;
  font-weight: 700;
  line-height: 50px;
  letter-spacing: .25px;
}

/* Taskbar */
.taskbar {
  flex: none;
  height: 60px;
  display: flex;
  align-items: center;
  padding-bottom: 1px;
  border-top: 1px solid #ccd6e2;
  background: linear-gradient(90deg, #e0edf6 0, #e0edf6 340px, #d2e1fa 430px, #d6dcf3 560px, #d7dbef 680px, #d2e1f9 830px, #d6dcf3 1000px, #d6dbed 1120px, #d3dff8 1260px, #d7dcef 1380px, #e0ebf8 1500px, #e0ecf7 1920px);
}
.widgets { margin-left: 21px; }
.start { margin-left: 451px; }
.searchbox {
  width: 274px;
  height: 39px;
  margin: 0 4px 0 16px;
  padding: 0 14px;
  display: flex;
  align-items: center;
  gap: 12px;
  border: 1px solid #c8d1e6;
  border-radius: 20px;
  background: #f4f6fd;
  color: #555;
  font-size: 17px;
  letter-spacing: -.4px;
}
.apps { display: flex; }
.app {
  position: relative;
  width: 55px;
  height: 49px;
  display: flex;
  align-items: center;
  justify-content: center;
}
.app > svg { position: relative; width: 30px; height: 30px; }
.app.running::after {
  content: "";
  position: absolute;
  left: 24px;
  bottom: 0;
  width: 8px;
  height: 4px;
  border-radius: 2px;
  background: #7c828e;
}
.app.alert::before,
.app.current::before {
  content: "";
  position: absolute;
  inset: 0 3px 0 2px;
  border-radius: 5px;
  background: #fbe6e8;
}
.app.current::before { inset: 0 8px 0 4px; background: #ebeff9; box-shadow: 0 0 1px #9aa4ba, 4px 0 0 #e0e5f2; }
.app.current::after { left: 13px; width: 13px; }
.app.alert::after { background: #c42b1c; }

.tray { margin-left: auto; margin-right: 25px; display: flex; align-items: center; }
.sync { margin-left: 11px; }
.lang, .clock { display: flex; flex-direction: column; font-size: 15px; line-height: 20px; letter-spacing: -.35px; }
.lang { width: 34px; align-items: center; margin-left: 14px; }
.wifi { margin-left: 20px; }
.vol { margin-left: 9px; }
.batt { margin-left: 9px; }
.clock { width: 78px; margin-left: 11px; align-items: flex-end; letter-spacing: -.3px; }
.badge {
  width: 20px;
  height: 20px;
  margin-left: 9px;
  border-radius: 50%;
  background: #0478d7;
  color: #fff;
  font-size: 13px;
  line-height: 20px;
  text-align: center;
}

.cursor { position: absolute; left: 1489px; top: 592px; }
```
